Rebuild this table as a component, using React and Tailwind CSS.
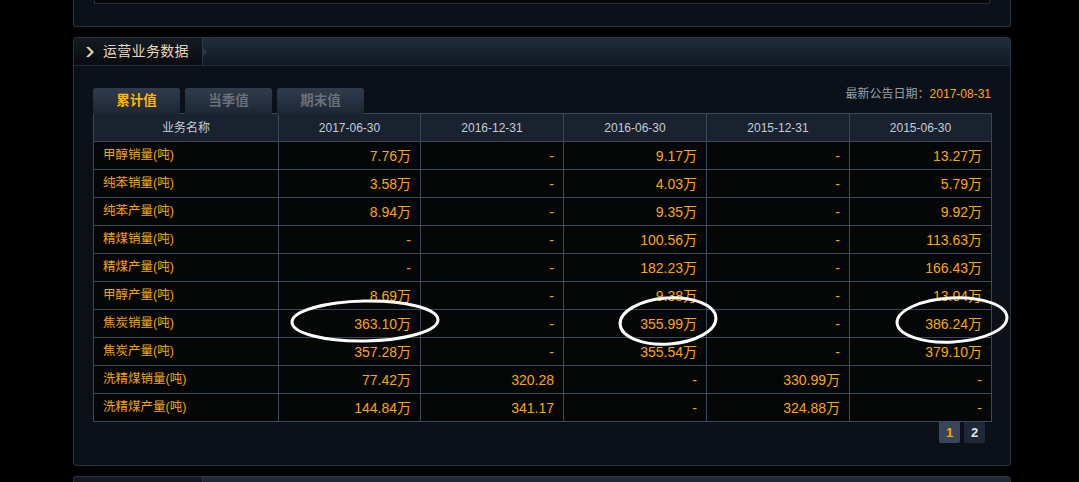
const rows = [
  ['甲醇销量(吨)', '7.76万', '-', '9.17万', '-', '13.27万'],
  ['纯苯销量(吨)', '3.58万', '-', '4.03万', '-', '5.79万'],
  ['纯苯产量(吨)', '8.94万', '-', '9.35万', '-', '9.92万'],
  ['精煤销量(吨)', '-', '-', '100.56万', '-', '113.63万'],
  ['精煤产量(吨)', '-', '-', '182.23万', '-', '166.43万'],
  ['甲醇产量(吨)', '8.69万', '-', '9.38万', '-', '13.04万'],
  ['焦炭销量(吨)', '363.10万', '-', '355.99万', '-', '386.24万'],
  ['焦炭产量(吨)', '357.28万', '-', '355.54万', '-', '379.10万'],
  ['洗精煤销量(吨)', '77.42万', '320.28', '-', '330.99万', '-'],
  ['洗精煤产量(吨)', '144.84万', '341.17', '-', '324.88万', '-'],
]

const dates = ['2017-06-30', '2016-12-31', '2016-06-30', '2015-12-31', '2015-06-30']
const colWidths = ['w-[185px]', 'w-[142px]', 'w-[143px]', 'w-[143px]', 'w-[143px]', 'w-[142px]']

const font = { fontFamily: '"Liberation Sans", "Noto Sans CJK SC", sans-serif' }

function PanelHeader({ title }) {
  return (
    <div className="flex h-[28px] bg-gradient-to-b from-[#1f2d3d] to-[#111923] border-b border-[#232c38] rounded-t-[3px]">
      <div className="relative flex items-center w-[129px] h-full bg-gradient-to-b from-[#151b24] to-[#090c11] border-r border-[#2c3744] rounded-tl-[3px]">
        {title && (
          <>
            <svg width="12" height="12" viewBox="0 0 12 12" className="ml-[10px]">
              <path d="M2 1 L7 6 L2 11 L5 11 L10 6 L5 1 Z" fill="#ead4a6" />
            </svg>
            <span className="ml-[7px] text-[14px] text-[#e6d6b6] tracking-[0.3px]">{title}</span>
            <div className="absolute right-[-5px] top-[10px] w-0 h-0 border-y-[4px] border-y-transparent border-l-[4px] border-l-[#2c3744]" />
          </>
        )}
      </div>
    </div>
  )
}

export default function App() {
  return (
    <div className="relative w-[1079px] h-[482px] overflow-hidden bg-black" style={font}>
      <div className="flex flex-col pl-[73px] w-[1011px]">
        {/* top panel, cropped */}
        <div className="h-[27px] bg-[#0c1018] border-x border-b border-[#29323e] rounded-b-[3px] px-[20px]">
          <div className="h-[4px] bg-[#07080a] border-x border-b border-[#2a2f36]" />
        </div>

        {/* main panel */}
        <div className="mt-[10px] h-[429px] bg-[#0c1018] border border-[#29323e] rounded-[3px] flex flex-col">
          <PanelHeader title="运营业务数据" />
          <div className="px-[19px] pt-[19px]">
            <div className="flex items-end justify-between">
              <div className="flex gap-[5px]">
                {['累计值', '当季值', '期末值'].map((t, i) => (
                  <div
                    key={t}
                    className={`w-[87px] h-[26px] flex items-center justify-center rounded-t-[3px] text-[13.5px] font-bold bg-gradient-to-b from-[#303c4e] to-[#1d2633] ${i === 0 ? 'text-[#ffb400]' : 'text-[#6c7078]'}`}
                  >
                    {t}
                  </div>
                ))}
              </div>
              <div className="text-[12px] pb-[11px]">
                <span className="text-[#9aa0a8]">最新公告日期：</span>
                <span className="text-[#ffa800]">2017-08-31</span>
              </div>
            </div>

            <table className="border-collapse table-fixed w-[898px] -mt-px">
              <thead>
                <tr className="h-[28px] bg-[#1a2230]">
                  <th className={`${colWidths[0]} border border-[#3b4859] text-[12px] font-normal text-[#c4ccd6]`}>业务名称</th>
                  {dates.map((d, i) => (
                    <th key={d} className={`${colWidths[i + 1]} border border-[#3b4859] text-[12px] font-normal text-[#c4ccd6]`}>{d}</th>
                  ))}
                </tr>
              </thead>
              <tbody>
                {rows.map((r) => (
                  <tr key={r[0]} className="h-[28px] bg-[#050707]">
                    <td className="border border-[#3b4859] pl-[9px] text-[12.5px] text-[#f5a400]">{r[0]}</td>
                    {r.slice(1).map((v, j) => (
                      <td key={j} className="border border-[#3b4859] pr-[9px] text-right text-[14px] text-[#ffa500] leading-none">
                        {v}
                      </td>
                    ))}
                  </tr>
                ))}
              </tbody>
            </table>

            <div className="flex justify-end gap-[4px] pr-[6px]">
              <div className="w-[21px] h-[21px] flex items-center justify-center bg-[#39455a] rounded-b-[2px] text-[13px] font-bold text-[#ffa500]">1</div>
              <div className="w-[21px] h-[21px] flex items-center justify-center bg-[#1f2836] rounded-b-[2px] text-[13px] font-bold text-[#dfe6ee]">2</div>
            </div>
          </div>
        </div>

        {/* next panel, cropped */}
        <div className="mt-[10px] h-[30px] bg-[#0c1018] border border-[#29323e] rounded-t-[3px]">
          <PanelHeader />
        </div>
      </div>

      {/* hand-drawn annotations */}
      <svg className="absolute inset-0 pointer-events-none" width="1079" height="482">
        <ellipse cx="365" cy="321" rx="73" ry="20" fill="none" stroke="#fff" strokeWidth="3" transform="rotate(-1 365 321)" />
        <ellipse cx="668" cy="321" rx="48" ry="23" fill="none" stroke="#fff" strokeWidth="3" transform="rotate(-4 668 321)" />
        <ellipse cx="952" cy="320" rx="55" ry="22" fill="none" stroke="#fff" strokeWidth="3" transform="rotate(-3 952 320)" />
      </svg>
    </div>
  )
}
